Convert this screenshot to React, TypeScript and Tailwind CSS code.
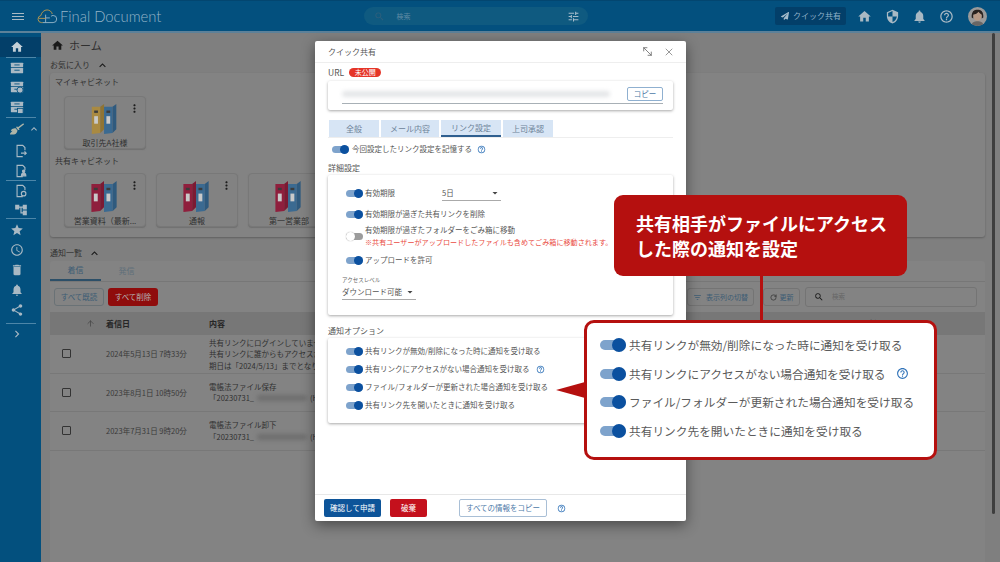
import type { ReactNode } from 'react';
import { X, MoveDiagonal2, ArrowUp, RotateCw } from 'lucide-react';
import { FaBroom, FaPaperPlane } from 'react-icons/fa';
import {
  MdAccessTime, MdAccountTree, MdChevronRight, MdDelete, MdExpandLess, MdHelpOutline, MdHome,
  MdMoreVert, MdNotifications, MdSearch, MdSecurity, MdShare, MdStar, MdTune, MdArrowDropDown, MdFilterList,
} from 'react-icons/md';

const font = { fontFamily: '"Noto Sans CJK JP", "Noto Sans", sans-serif' };

function CabinetIcon({ variant }: { variant: 0 | 1 | 2 }) {
  return (
    <svg viewBox="0 0 16 16" className="h-[14px] w-[14px]" fill="#a9b9c4">
      <rect x="1" y="2" width="14" height="5" rx="0.5" />
      <rect x="1" y="8" width="14" height="6" rx="0.5" />
      <rect x="5" y="4" width="6" height="1" fill="#03507e" />
      <rect x="5" y="10" width="6" height="1" fill="#03507e" />
      {variant === 1 && <circle cx="11.5" cy="11.5" r="3.5" stroke="#03507e" />}
      {variant === 2 && <rect x="8.5" y="9.5" width="6.5" height="6" stroke="#03507e" />}
    </svg>
  );
}

function DocIcon({ mark }: { mark: 'arrow' | 'person' | 'gear' }) {
  return (
    <svg viewBox="0 0 16 16" className="h-[14px] w-[14px]" fill="none" stroke="#a9b9c4" strokeWidth="1.3">
      <path d="M10 14.5H3.5V1.5H10l2.5 2.5v3" />
      {mark === 'arrow' && <path d="M8 10.5h6M12 8.5l2 2-2 2" />}
      {mark === 'person' && <path d="M8.5 13.5c0-2 1-3 2.5-3s2.5 1 2.5 3zM11 9.5a1.3 1.3 0 100-2.6 1.3 1.3 0 000 2.6z" fill="#a9b9c4" />}
      {mark === 'gear' && <circle cx="11" cy="11" r="2.6" />}
    </svg>
  );
}

function Sidebar() {
  const icon = 'h-[14px] w-[14px] text-[#a9b9c4]';
  const Divider = () => <div className="mx-auto h-px w-[30px] bg-[#4d86a8]" />;
  const Item = ({ children, className = 'h-[20px]' }: { children: ReactNode; className?: string }) => (
    <div className={`flex items-center justify-center pr-[7px] ${className}`}>{children}</div>
  );
  return (
    <aside className="flex w-[41px] shrink-0 flex-col bg-[#03507e] pt-[4px]">
      <div className="flex h-[20px] items-center justify-center bg-[#033f69] pr-[7px]"><MdHome className="h-[14px] w-[14px] text-[#c4d0d8]" /></div>
      <Divider />
      <Item className="h-[19px]"><CabinetIcon variant={0} /></Item>
      <Item><CabinetIcon variant={1} /></Item>
      <Item><CabinetIcon variant={2} /></Item>
      <Divider />
      <div className="relative flex h-[21px] items-center justify-center pr-[7px]">
        <FaBroom className="h-[14px] w-[14px] text-[#aeb5a8]" />
        <MdExpandLess className="absolute right-[1px] top-[5px] h-[12px] w-[12px] text-[#a9b9c4]" />
      </div>
      <Item className="h-[23px] pl-[8px]"><DocIcon mark="arrow" /></Item>
      <Item className="h-[18px] pl-[8px]"><DocIcon mark="person" /></Item>
      <Divider />
      <Item className="h-[20px] pl-[8px]"><DocIcon mark="gear" /></Item>
      <Item className="h-[17px] pl-[8px]"><MdAccountTree className={icon} /></Item>
      <Divider />
      <Item className="h-[21px]"><MdStar className={icon} /></Item>
      <Item><MdAccessTime className={icon} /></Item>
      <Item><MdDelete className={icon} /></Item>
      <Item><MdNotifications className={icon} /></Item>
      <Item className="h-[19px]"><MdShare className={icon} /></Item>
      <div className="h-[4px]" />
      <Divider />
      <Item><MdChevronRight className={icon} /></Item>
    </aside>
  );
}

function Logo() {
  return (
    <svg viewBox="0 0 22 16" className="h-[15px] w-[21px]" fill="none" strokeWidth="1">
      <path d="M6 14.5H4.5a3.8 3.8 0 01-.6-7.5C4.6 3.4 7.6 1 10.5 1c2.8 0 4.9 1.8 5.6 4.3" stroke="#b8994f" />
      <path d="M6 14.5h11a3.8 3.8 0 000-7.6c-1 0-1.5.3-2.2.9M9 6v8.5M9 9.5h4.5" stroke="#94b4c8" />
      <path d="M2 10h7" stroke="#b8994f" />
    </svg>
  );
}

function TopBar() {
  const icon = 'h-[15px] w-[15px] text-[#a9b9c4]';
  return (
    <header className="flex h-[33px] shrink-0 items-center border-t border-[#034670] border-b-2 border-b-[#5d8199] bg-[#03507e]">
      <div className="flex w-[37px] shrink-0 justify-center pr-[2px]">
        <div className="flex w-[12px] flex-col gap-[2px]">
          <div className="h-px bg-[#a9b9c4]" />
          <div className="h-px bg-[#a9b9c4]" />
          <div className="h-px bg-[#a9b9c4]" />
        </div>
      </div>
      <Logo />
      <span className="ml-[2px] text-[14.800px] font-light leading-none text-[#94b4c8]" style={{ fontFamily: 'Lato, sans-serif' }}>Final Document</span>
      <div className="ml-[203px] flex h-[18px] w-[224px] items-center rounded-full bg-[#0f5a80] pl-[10px] pr-[8px]">
        <MdSearch className="h-[11px] w-[11px] text-[#2d5f7c]" />
        <span className="ml-[11px] text-[7px] text-[#5f8aa4]">検索</span>
        <MdTune className="ml-auto h-[13px] w-[13px] text-[#a6bccb]" />
      </div>
      <div className="ml-[187px] flex h-[18px] w-[71px] items-center justify-center gap-[4px] rounded-[2px] bg-[#033f69]">
        <FaPaperPlane className="h-[8px] w-[8px] text-[#a6bccb]" />
        <span className="text-[8px] text-[#8fb0c8]">クイック共有</span>
      </div>
      <div className="ml-[11px] flex w-[97px] items-center justify-between">
        <MdHome className={icon} />
        <MdSecurity className={icon} />
        <MdNotifications className={icon} />
        <MdHelpOutline className={icon} />
      </div>
      <svg viewBox="0 0 18 18" className="ml-[14px] h-[19px] w-[19px] rounded-full">
        <rect width="18" height="18" fill="#9a9a9a" />
        <path d="M3.5 10C3 4 6 2.5 9 2.5S15 4 14.5 10l-1.5 1V7H5v4z" fill="#2a2320" />
        <ellipse cx="9" cy="8.5" rx="3.8" ry="4.6" fill="#b89a86" />
        <path d="M5 7c2 0 4-1 5-2.500 1 1.500 2 2 3 2.500l.5-2L9 3 5 4z" fill="#2a2320" />
        <path d="M3 18c.5-3.500 3-4.500 6-4.500s5.500 1 6 4.500z" fill="#6a6664" />
      </svg>
    </header>
  );
}

function Binder({ left }: { left: string }) {
  const one = (x: number, color: string, spine: string) => (
    <g transform={`translate(${x} 0)`}>
      <polygon points="0,4 9,4 9,32 0,33" fill={color} />
      <polygon points="9,4 13,1 13,28 9,32" fill={spine} />
      <rect x="2.500" y="14" width="4" height="8" fill="#c9c9c9" />
      <rect x="2.500" y="8" width="4" height="2.500" fill="#3b3b3b" />
    </g>
  );
  return (
    <svg viewBox="0 0 28 34" className="h-[34px] w-[28px]">
      {one(0, left, left === '#a98a42' ? '#8f7434' : '#7c1a33')}
      {one(13, '#3b6a91', '#2f5a7e')}
    </svg>
  );
}

function CabinetCard({ title, left, menu = true }: { title: string; left: string; menu?: boolean }) {
  return (
    <div className="relative flex h-full w-[82px] shrink-0 flex-col items-center rounded-[4px] border border-[#787878] bg-[#828282] pt-[6px] shadow-[0_1px_1px_#707070]">
      <Binder left={left} />
      <span className="mt-[2px] whitespace-nowrap text-[8px] leading-[11px] text-[#303030]">{title}</span>
      {menu && <MdMoreVert className="absolute right-[4px] top-[5px] h-[13px] w-[13px] text-[#1d1d1d]" />}
    </div>
  );
}

const rows = [
  { date: '2024年5月13日 7時33分', lines: ['共有リンクにログインしていません。', '共有リンクに誰からもアクセスがありません。', '期日は「2024/5/13」までとなります。'] },
  { date: '2023年8月1日 10時50分', lines: ['電帳法ファイル保存'], file: '「20230731_' },
  { date: '2023年7月31日 9時20分', lines: ['電帳法ファイル卸下'], file: '「20230731_' },
];

function Background() {
  return (
    <main className="flex min-w-0 flex-1 flex-col pl-[9px] pr-[15px] text-[#303030]">
      <div className="flex h-[24px] shrink-0 items-center gap-[2px] pl-[1px]">
        <MdHome className="h-[13px] w-[13px] text-[#1a1a1a]" />
        <span className="ml-[3px] text-[11px] text-[#303030]">ホーム</span>
      </div>
      <div className="flex h-[16px] shrink-0 items-center gap-[6px] text-[8px]">
        <span>お気に入り</span>
        <MdExpandLess className="h-[13px] w-[13px] text-[#1a1a1a]" />
      </div>
      <section className="h-[164px] shrink-0 rounded-[3px] bg-[#838383] px-[5px] shadow-[0_1px_2px_#606060]">
        <div className="flex h-[18px] items-center text-[8px]">マイキャビネット</div>
        <div className="mt-[5px] h-[53px] pl-[9px]"><CabinetCard title="取引先A社様" left="#a98a42" /></div>
        <div className="flex h-[24px] items-center text-[8px]">共有キャビネット</div>
        <div className="flex h-[54px] gap-[10px] pl-[9px]">
          <CabinetCard title="営業資料（最新..." left="#8f1f3d" />
          <CabinetCard title="通報" left="#8f1f3d" />
          <CabinetCard title="第一営業部" left="#8f1f3d" />
        </div>
      </section>
      <div className="flex h-[24px] shrink-0 items-center gap-[6px] pt-[8px] text-[8px]">
        <span>通知一覧</span>
        <MdExpandLess className="h-[13px] w-[13px] text-[#1a1a1a]" />
      </div>
      <section className="flex-1 rounded-t-[3px] bg-[#838383]">
        <div className="flex h-[21px] border-b border-[#777777] text-[8px]">
          <div className="flex w-[51px] items-center justify-center border-b-2 border-[#2c4f68] text-[#3c5c74]">着信</div>
          <div className="flex w-[51px] items-center justify-center text-[#5f6f7a]">発信</div>
        </div>
        <div className="flex h-[30px] items-center pl-[4px] pr-[8px]">
          <div className="flex h-[18px] w-[50px] items-center justify-center rounded-[3px] border border-[#6a7276] text-[7.500px] text-[#3c5c74]">すべて既読</div>
          <div className="ml-[4px] flex h-[18px] w-[50px] items-center justify-center rounded-[3px] bg-[#8f0c0c] text-[7.500px] text-[#b5b5b5]">すべて削除</div>
          <div className="ml-auto flex h-[18px] w-[67px] items-center justify-center gap-[4px] rounded-[3px] border border-[#747474] text-[7px] text-[#3c5c74]">
            <MdFilterList className="h-[9px] w-[9px]" />表示列の切替
          </div>
          <div className="ml-[9px] flex h-[18px] w-[37px] items-center justify-center gap-[3px] rounded-[3px] border border-[#747474] text-[7px] text-[#3c5c74]">
            <RotateCw className="h-[7px] w-[7px] text-[#222222]" />更新
          </div>
          <div className="ml-[5px] flex h-[20px] w-[172px] items-center rounded-[3px] border border-[#747474] pl-[8px] text-[6.500px] text-[#666666]">
            <MdSearch className="mr-[8px] h-[10px] w-[10px] text-[#1a1a1a]" />検索
          </div>
        </div>
        <div className="flex h-[23px] items-center bg-[#777777] text-[8px] font-bold text-[#262626]">
          <div className="flex w-[56px] justify-end pr-[11px]"><ArrowUp className="h-[9px] w-[9px] text-[#444444]" /></div>
          <div className="w-[103px]">着信日</div>
          <div className="w-[656px]">内容</div>
          <div className="font-normal">受信者</div>
        </div>
        {rows.map((r) => (
          <div key={r.date} className="flex h-[38.600px] items-center border-b border-[#787878] text-[7.500px] leading-[11.500px]">
            <div className="flex w-[56px] pl-[12px]"><div className="h-[9px] w-[9px] rounded-[1px] border border-[#333333]" /></div>
            <div className="w-[103px] whitespace-nowrap text-[#3a3a3a]">{r.date}</div>
            <div>
              {r.lines.map((l) => <div key={l} className="whitespace-nowrap">{l}</div>)}
              {r.file && (
                <div className="flex items-center whitespace-nowrap">
                  <span>{r.file}</span>
                  <span className="mx-[3px] h-[6px] w-[50px] rounded-full bg-[#6e6e6e] blur-[2px]" />
                  <span>(H</span>
                </div>
              )}
            </div>
          </div>
        ))}
      </section>
    </main>
  );
}

function Toggle({ on = true }: { on?: boolean }) {
  return (
    <div className="relative h-[9px] w-[17px] shrink-0">
      <div className={`absolute left-0 top-[1px] h-[7px] w-[17px] rounded-full ${on ? 'bg-[#7ea3cc]' : 'bg-[#9c9c9c]'}`} />
      <div className={`absolute top-0 h-[9px] w-[9px] rounded-full ${on ? 'right-0 bg-[#0b509f]' : 'left-0 bg-white shadow-[0_0_1px_#888888]'}`} />
    </div>
  );
}

function BigToggle() {
  return (
    <div className="relative h-[14px] w-[26px] shrink-0">
      <div className="absolute left-0 top-[2px] h-[10px] w-[26px] rounded-full bg-[#7ea3cc]" />
      <div className="absolute right-0 top-0 h-[14px] w-[14px] rounded-full bg-[#0b509f]" />
    </div>
  );
}

function Help({ className }: { className: string }) {
  return <MdHelpOutline className={`text-[#2f72b8] ${className}`} />;
}

const tabs = ['全般', 'メール内容', 'リンク設定', '上司承認'];
const notifyRows = [
  '共有リンクが無効/削除になった時に通知を受け取る',
  '共有リンクにアクセスがない場合通知を受け取る',
  'ファイル/フォルダーが更新された場合通知を受け取る',
  '共有リンク先を開いたときに通知を受け取る',
];

function Modal() {
  return (
    <div className="absolute left-[315px] top-[41px] flex h-[480px] w-[371px] flex-col rounded-[2px] bg-white text-[#555555] shadow-[0_4px_14px_rgba(0,0,0,0.45)]">
      <div className="flex h-[22px] shrink-0 items-center border-b border-[#eeeeee] pl-[13px] pr-[11px] text-[8px]">
        <span>クイック共有</span>
        <MoveDiagonal2 className="ml-auto h-[13px] w-[13px] text-[#666666]" strokeWidth={1.5} />
        <X className="ml-[9px] h-[12px] w-[12px] text-[#777777]" strokeWidth={1.5} />
      </div>
      <div className="flex min-h-0 flex-1 flex-col px-[13px]">
        <div className="flex h-[18px] shrink-0 items-center gap-[5px] text-[8.500px]">
          <span>URL</span>
          <span className="flex h-[9px] w-[32px] items-center justify-center rounded-full bg-[#e53528] text-[7px] text-white">未公開</span>
        </div>
        <div className="relative h-[29px] shrink-0 rounded-[2px] bg-white shadow-[0_1px_3px_rgba(0,0,0,0.35)]">
          <div className="absolute left-[14px] top-[10px] h-[6px] w-[268px] rounded-full bg-[#e3e5e7] blur-[2px]" />
          <div className="absolute bottom-[6px] left-[14px] right-[10px] h-px bg-[#a8b0b6]" />
          <div className="absolute right-[10px] top-[6px] flex h-[14px] w-[36px] items-center justify-center rounded-[2px] border border-[#8fb0d0] bg-white text-[7.500px] text-[#4d7aa8]">コピー</div>
        </div>
        <div className="mt-[10px] flex h-[18px] shrink-0 gap-[2px] border-b border-[#eeeeee] pl-[1px] text-[8px]">
          {tabs.map((t, i) => (
            <div
              key={t}
              className={`flex items-center justify-center bg-[#d7e5f5] text-[#6d8298] ${i === 0 ? 'w-[50px]' : i === 1 ? 'w-[58px]' : i === 2 ? 'w-[60px] border-b-2 border-[#2f5f8f] text-[#4d6f92]' : 'w-[50px]'}`}
            >
              {t}
            </div>
          ))}
        </div>
        <div className="flex h-[22px] shrink-0 items-center pl-[4px] text-[7.500px]">
          <Toggle />
          <span className="ml-[3px]">今回設定したリンク設定を記憶する</span>
          <Help className="ml-[5px] h-[9px] w-[9px]" />
        </div>
        <div className="flex h-[15px] shrink-0 items-center text-[8px]">詳細設定</div>
        <div className="h-[140px] shrink-0 rounded-[2px] bg-white pl-[18px] pt-[8px] text-[7.500px] shadow-[0_1px_3px_rgba(0,0,0,0.35)]">
          <div className="flex h-[20px] items-center">
            <Toggle />
            <span className="ml-[2px] w-[77px]">有効期限</span>
            <div className="flex h-[16px] w-[59px] items-center justify-between border-b border-[#aaaaaa] text-[7.500px]">
              <span>5日</span>
              <MdArrowDropDown className="h-[12px] w-[12px] text-[#444444]" />
            </div>
          </div>
          <div className="mt-[1px] flex h-[20px] items-center">
            <Toggle />
            <span className="ml-[2px]">有効期限が過ぎた共有リンクを削除</span>
          </div>
          <div className="flex h-[24px] items-center">
            <Toggle on={false} />
            <div className="ml-[2px] leading-[12px]">
              <div>有効期限が過ぎたフォルダーをごみ箱に移動</div>
              <div className="whitespace-nowrap text-[7.100px] text-[#ea4b42]">※共有ユーザーがアップロードしたファイルも含めてごみ箱に移動されます。</div>
            </div>
          </div>
          <div className="mt-[2px] flex h-[20px] items-center">
            <Toggle />
            <span className="ml-[2px]">アップロードを許可</span>
          </div>
          <div className="-ml-[4px] mt-[5px] text-[5.500px] leading-[10px] text-[#666666]">アクセスレベル</div>
          <div className="-ml-[4px] flex h-[15px] w-[74px] items-center justify-between border-b border-[#aaaaaa] text-[7.500px]">
            <span>ダウンロード可能</span>
            <MdArrowDropDown className="h-[12px] w-[12px] text-[#444444]" />
          </div>
        </div>
        <div className="mt-[8px] flex h-[15px] shrink-0 items-center text-[8px]">通知オプション</div>
        <div className="h-[85px] shrink-0 rounded-[2px] bg-white pl-[18px] pt-[4px] text-[7.500px] shadow-[0_1px_3px_rgba(0,0,0,0.35)]">
          {notifyRows.map((t, i) => (
            <div key={t} className="flex h-[18px] items-center">
              <Toggle />
              <span className="ml-[2px]">{t}</span>
              {i === 1 && <Help className="ml-[6px] h-[9px] w-[9px]" />}
            </div>
          ))}
        </div>
      </div>
      <div className="flex h-[27px] shrink-0 items-center border-t border-[#e8e8e8] pl-[9px] text-[7.500px]">
        <div className="flex h-[18px] w-[57px] items-center justify-center rounded-[2px] bg-[#0d5499] text-white">確認して申請</div>
        <div className="ml-[9px] flex h-[18px] w-[37px] items-center justify-center rounded-[2px] bg-[#c4101c] text-white">破棄</div>
        <div className="ml-[32px] flex h-[18px] w-[88px] items-center justify-center rounded-[2px] border border-[#a9bfd6] text-[#4d7aa8]">すべての情報をコピー</div>
        <Help className="ml-[10px] h-[9px] w-[9px]" />
      </div>
    </div>
  );
}

function Callouts() {
  return (
    <>
      <div className="absolute left-[614px] top-[195px] flex h-[81px] w-[293px] flex-col justify-center rounded-[9px] bg-[#b5100f] pl-[22px] text-[18px] font-bold leading-[25px] text-white">
        <div>共有相手がファイルにアクセス</div>
        <div>した際の通知を設定</div>
      </div>
      <div className="absolute left-[760px] top-[276px] h-[45px] w-[3px] bg-[#b5100f]" />
      <svg viewBox="0 0 29 16" className="absolute left-[556px] top-[382px] h-[16px] w-[29px]">
        <polygon points="0,8 29,0 29,16" fill="#b5100f" />
      </svg>
      <div className="absolute left-[584px] top-[320px] flex h-[140px] w-[353px] flex-col justify-center rounded-[10px] border-[3px] border-[#b5100f] bg-white pb-[4px] pl-[13px] text-[11.700px] text-[#5a5a5a]">
        {notifyRows.map((t, i) => (
          <div key={t} className="flex h-[28.500px] items-center">
            <BigToggle />
            <span className="ml-[3px] whitespace-nowrap">{t}</span>
            {i === 1 && <Help className="ml-[10px] h-[13px] w-[13px]" />}
          </div>
        ))}
      </div>
    </>
  );
}

export default function App() {
  return (
    <div className="relative flex h-[562px] w-[1000px] flex-col overflow-hidden bg-[#7f7f7f]" style={font}>
      <TopBar />
      <div className="flex min-h-0 flex-1">
        <Sidebar />
        <Background />
      </div>
      <div className="absolute right-[5px] top-[33px] h-[481px] w-[3px] rounded-full bg-[#3e3e3e]" />
      <Modal />
      <Callouts />
    </div>
  );
}
